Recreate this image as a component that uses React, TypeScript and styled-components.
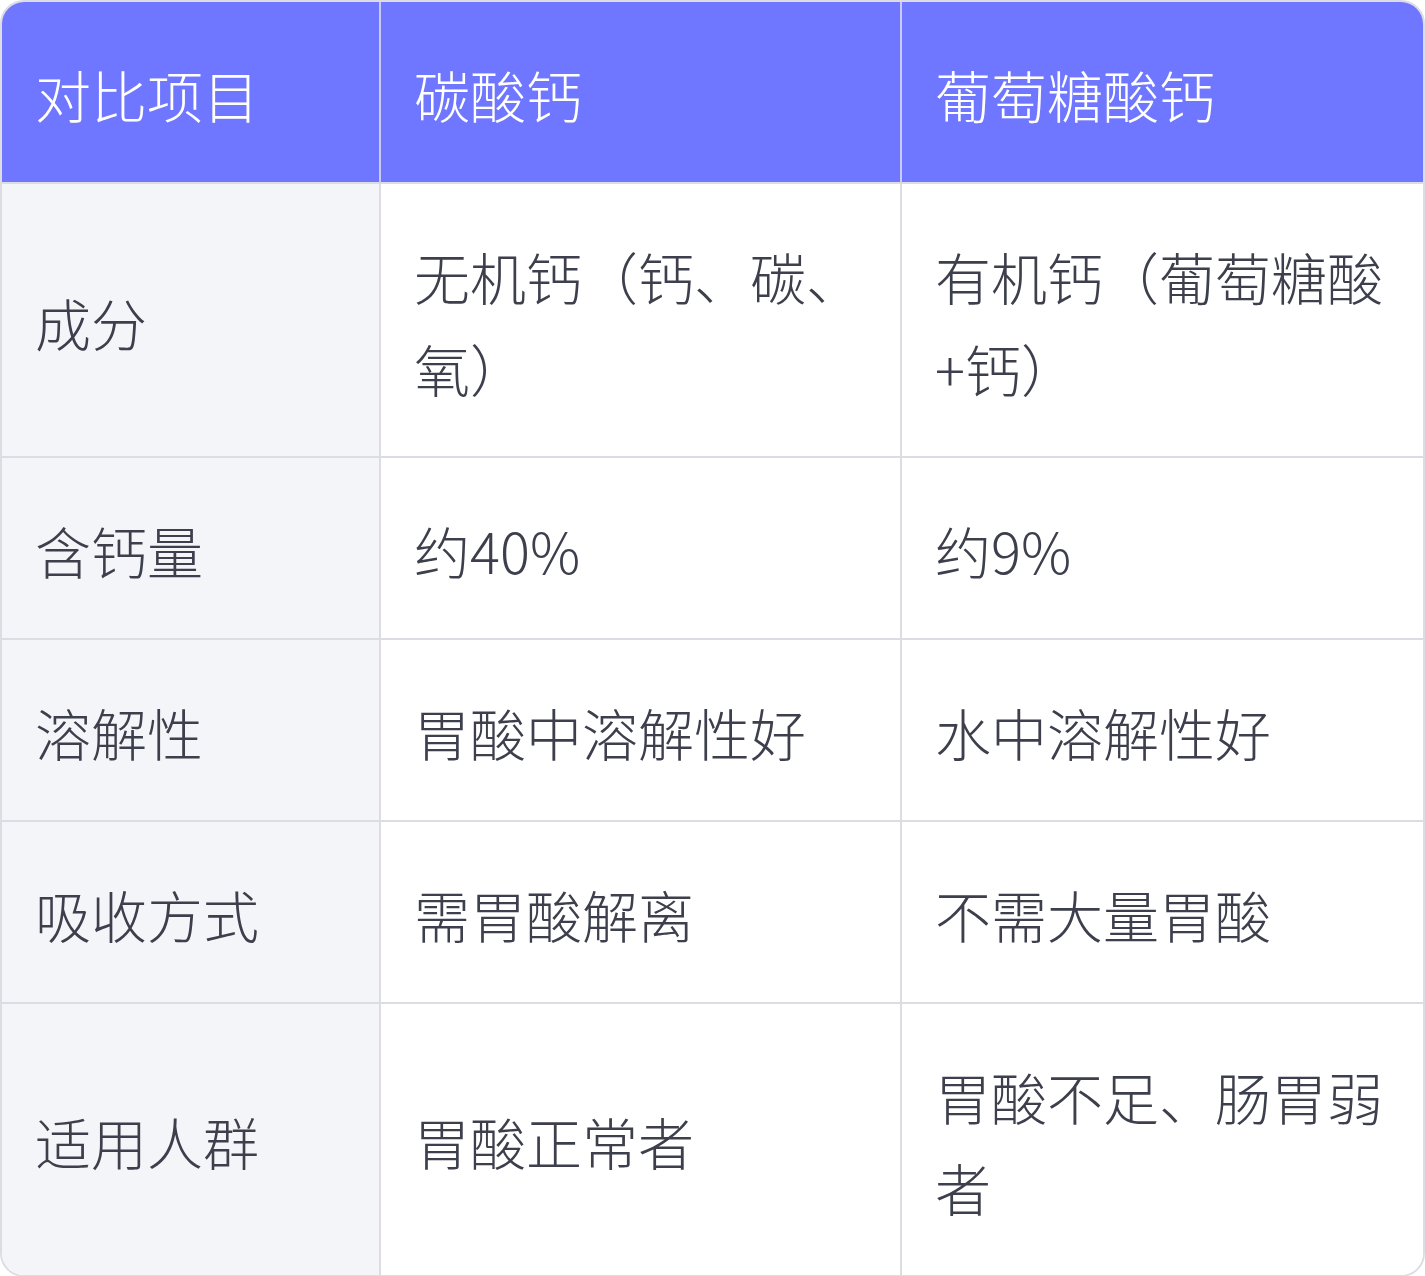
import React from "react";
import styled, { createGlobalStyle } from "styled-components";

const GlobalStyle = createGlobalStyle`
  html, body { margin: 0; padding: 0; background: #ffffff; }
  body { font-family: "Noto Sans CJK SC", "Noto Sans", sans-serif; }
`;

const Table = styled.div`
  box-sizing: border-box;
  width: 1425px;
  display: grid;
  grid-template-columns: 379px 1fr 1fr;
  border: 2px solid #dcdce2;
  border-radius: 24px;
  overflow: hidden;
  background: #ffffff;
`;

const Cell = styled.div<{ $head?: boolean; $label?: boolean; $lastCol?: boolean; $lastRow?: boolean }>`
  box-sizing: border-box;
  display: flex;
  align-items: center;
  padding: 46px 33px 42.4px 33px;
  font-family: "Noto Sans CJK SC", sans-serif;
  font-weight: 300;
  font-size: 56px;
  line-height: 91.6px;
  color: ${(p) => (p.$head ? "#ffffff" : "#3d404c")};
  background: ${(p) => (p.$head ? "#6f76ff" : p.$label ? "#f4f5f9" : "#ffffff")};
  border-right: ${(p) => (p.$lastCol ? "none" : p.$head ? "2px solid #c9cbf3" : "2px solid #dcdce2")};
  border-bottom: ${(p) => (p.$lastRow ? "none" : "2px solid #dcdce2")};
`;

const head = ["对比项目", "碳酸钙", "葡萄糖酸钙"];
const rows: string[][] = [
  ["成分", "无机钙（钙、碳、氧）", "有机钙（葡萄糖酸+钙）"],
  ["含钙量", "约40%", "约9%"],
  ["溶解性", "胃酸中溶解性好", "水中溶解性好"],
  ["吸收方式", "需胃酸解离", "不需大量胃酸"],
  ["适用人群", "胃酸正常者", "胃酸不足、肠胃弱者"],
];

export default function App() {
  return (
    <>
      <GlobalStyle />
      <Table>
        {head.map((h, i) => (
          <Cell key={h} $head $lastCol={i === 2}>
            {h}
          </Cell>
        ))}
        {rows.map((r, ri) =>
          r.map((c, ci) => (
            <Cell
              key={`${ri}-${ci}`}
              $label={ci === 0}
              $lastCol={ci === 2}
              $lastRow={ri === rows.length - 1}
            >
              {c}
            </Cell>
          ))
        )}
      </Table>
    </>
  );
}
